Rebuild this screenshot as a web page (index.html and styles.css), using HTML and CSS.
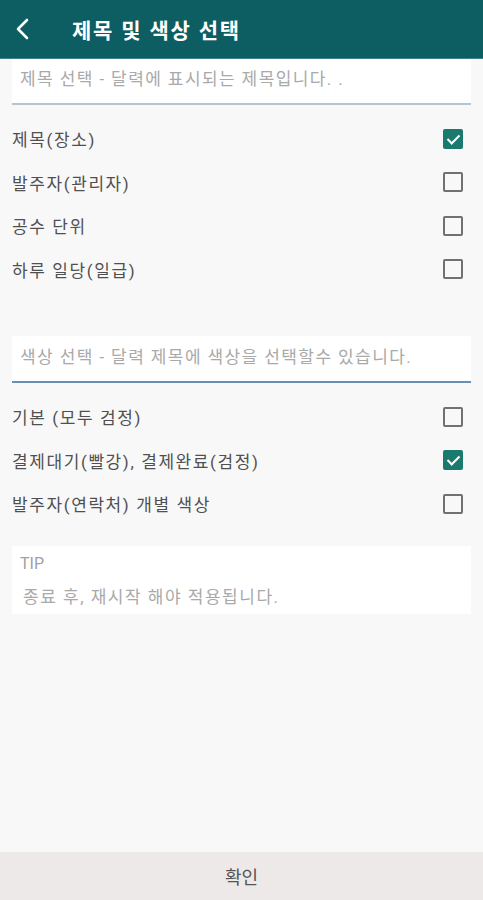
FILE: index.html
```html
<!DOCTYPE html>
<html lang="ko">
<head>
    <meta charset="UTF-8">
    <meta name="viewport" content="width=device-width, initial-scale=1.0">
    <title>제목 및 색상 선택</title>
    <link rel="stylesheet" href="styles.css">
</head>
<body>
    <div class="app">
        <div class="header">
            <button class="back" aria-label="뒤로">
                <svg width="18" height="22" viewBox="0 0 18 22"><path d="M13 2 L4 11 L13 20" fill="none" stroke="#fff" stroke-width="2.6" stroke-linecap="round" stroke-linejoin="round"/></svg>
            </button>
            <h1>제목 및 색상 선택</h1>
        </div>

        <div class="content">
            <div class="field first">
                <input type="text" placeholder="제목 선택 - 달력에 표시되는 제목입니다. .">
            </div>

            <ul class="options">
                <li><span>제목(장소)</span><label class="check on"></label></li>
                <li><span>발주자(관리자)</span><label class="check"></label></li>
                <li><span>공수 단위</span><label class="check"></label></li>
                <li><span>하루 일당(일급)</span><label class="check"></label></li>
            </ul>

            <div class="field second">
                <input type="text" placeholder="색상 선택 - 달력 제목에 색상을 선택할수 있습니다.">
            </div>

            <ul class="options">
                <li><span>기본 (모두 검정)</span><label class="check"></label></li>
                <li><span>결제대기(빨강), 결제완료(검정)</span><label class="check on"></label></li>
                <li><span>발주자(연락처) 개별 색상</span><label class="check"></label></li>
            </ul>

            <div class="tip">
                <p class="tip_title">TIP</p>
                <p class="tip_text">종료 후, 재시작 해야 적용됩니다.</p>
            </div>
        </div>

        <button class="confirm">확인</button>
    </div>
</body>
</html>
```

FILE: styles.css
```css
*{
    box-sizing: border-box;
}

body{
    margin: 0;
    font-family: Roboto, "Noto Sans CJK KR", sans-serif;
    background: #f8f8f8;
}

.app{
    height: 900px;
    display: flex;
    flex-direction: column;
}

.header{
    height: 59px;
    background: #0c5e63;
    border-bottom: 1px solid #3f8388;
    display: flex;
    align-items: center;
    padding-left: 14px;
}

.back{
    background: none;
    border: none;
    padding: 0;
    width: 20px;
    height: 24px;
    display: flex;
    align-items: center;
}

.header h1{
    margin: 0 0 0 38px;
    color: #fff;
    font-size: 21px;
    font-weight: 700;
    letter-spacing: 1.8px;
}

.content{
    flex: 1;
    padding: 0 12px;
}

.field input{
    width: 100%;
    height: 47px;
    border: none;
    background: #fff;
    padding: 0 8px 3px;
    font-family: inherit;
    font-size: 17px;
    letter-spacing: 1.4px;
    outline: none;
}

.field input::placeholder{
    color: #a9a9a9;
}

.field.first input{
    height: 46px;
    border-bottom: 2px solid #b3c4d3;
    padding-bottom: 4px;
}

.field.second{
    margin-top: 45px;
}

.field.second input{
    border-bottom: 2px solid #6690b6;
}

.options{
    list-style: none;
    margin: 0;
    padding: 12px 0 0;
}

.options li{
    height: 43.5px;
    display: flex;
    align-items: center;
    justify-content: space-between;
    font-size: 17px;
    letter-spacing: 1.6px;
    color: #505050;
    padding-right: 8px;
}

.check{
    width: 20px;
    height: 20px;
    border: 2px solid #717171;
    border-radius: 2px;
    position: relative;
}

.check.on{
    background: #1b7a6d;
    border-color: #1b7a6d;
}

/* 체크 표시 */
.check.on::after{
    content: "";
    position: absolute;
    left: 5px;
    top: 1px;
    width: 5px;
    height: 10px;
    border: solid #fff;
    border-width: 0 2px 2px 0;
    transform: rotate(45deg);
}

.tip{
    margin-top: 20px;
    background: #fff;
    padding: 8px 8px 6px;
}

.tip p{
    margin: 0;
}

.tip_title{
    font-size: 16px;
    color: #a0a0a0;
    line-height: 20px;
}

.tip_text{
    margin-top: 12px !important;
    padding-left: 3px;
    font-size: 17px;
    letter-spacing: 1.5px;
    color: #a9a9a9;
    line-height: 22px;
}

.confirm{
    height: 48px;
    border: none;
    background: #ece9e8;
    font-family: inherit;
    font-size: 18px;
    color: #555;
}
```
